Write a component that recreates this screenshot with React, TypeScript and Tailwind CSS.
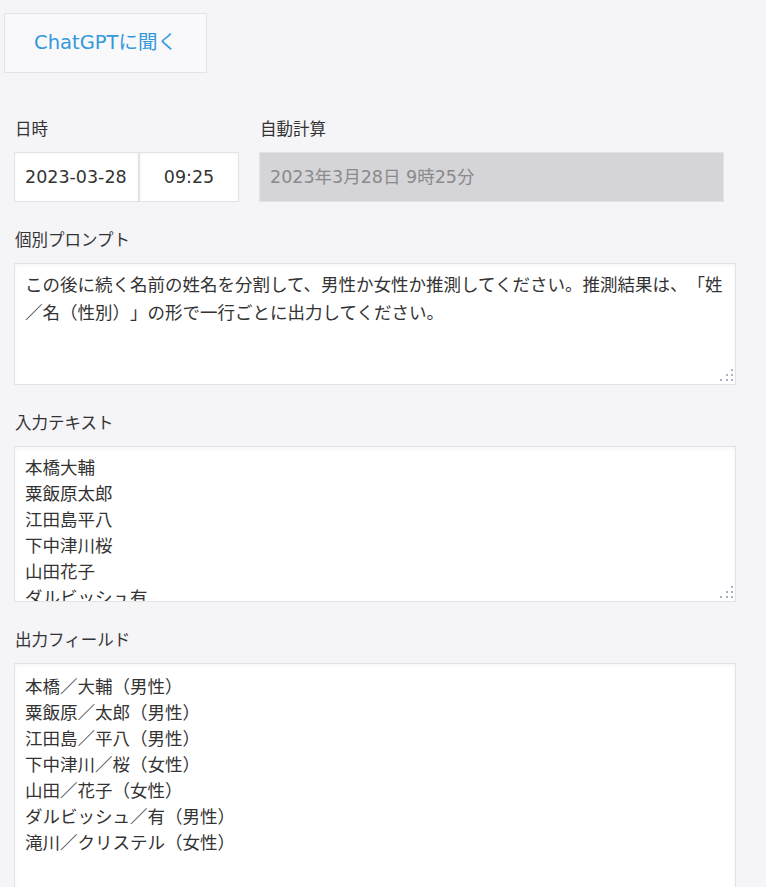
import React from 'react'

const FONT = '"DejaVu Sans", "Noto Sans CJK JP", sans-serif'

const inputNames = ['本橋大輔', '粟飯原太郎', '江田島平八', '下中津川桜', '山田花子', 'ダルビッシュ有', '滝川クリステル']

const outputs = [
  '本橋／大輔（男性）',
  '粟飯原／太郎（男性）',
  '江田島／平八（男性）',
  '下中津川／桜（女性）',
  '山田／花子（女性）',
  'ダルビッシュ／有（男性）',
  '滝川／クリステル（女性）',
]

function Grip() {
  return (
    <svg className="absolute right-[2px] bottom-[2px]" width="14" height="14" viewBox="0 0 14 14">
      <g fill="#a9b2c3">
        <rect x="12" y="1" width="2" height="2" />
        <rect x="7" y="6" width="2" height="2" />
        <rect x="12" y="6" width="2" height="2" />
        <rect x="1" y="11" width="2" height="2" />
        <rect x="7" y="11" width="2" height="2" />
        <rect x="12" y="11" width="2" height="2" />
      </g>
    </svg>
  )
}

function Label({ children }: { children: React.ReactNode }) {
  return <div className="h-5 leading-[24px] text-[16.5px] text-[#333] pl-px mb-[14px]">{children}</div>
}

export default function App() {
  return (
    <div
      className="min-h-screen bg-[#f5f4f7] pt-[13px] pl-[4px] [text-spacing-trim:space-all]"
      style={{ fontFamily: FONT }}
    >
      <button className="w-[203px] h-[60px] bg-[#f9f9fc] border border-[#e3e3e6] text-[#3498db] text-[19.5px]">
        ChatGPTに聞く
      </button>

      <div className="flex flex-col gap-[27px] pl-[10px] mt-[45px] pb-4">
        <div className="flex gap-[20px]">
          <div>
            <Label>日時</Label>
            <div className="flex">
              <div className="w-[125px] h-[50px] bg-white border border-[#e3e3e6] shadow-[inset_0_1px_3px_rgba(0,0,0,0.04)] flex items-center pl-[10px] text-[17.5px] text-[#333]">
                2023-03-28
              </div>
              <div className="w-[100px] h-[50px] bg-white border border-[#e3e3e6] shadow-[inset_0_1px_3px_rgba(0,0,0,0.04)] flex items-center justify-center text-[17.5px] text-[#333]">
                09:25
              </div>
            </div>
          </div>
          <div>
            <Label>自動計算</Label>
            <div className="w-[465px] h-[50px] bg-[#d5d4d8] border border-[#e3e3e6] flex items-center pl-[10px] text-[17.5px] text-[#8a8a8a]">
              2023年3月28日 9時25分
            </div>
          </div>
        </div>

        <div>
          <Label>個別プロンプト</Label>
          <div className="relative w-[722px] h-[122px] bg-white border border-[#e3e3e6] shadow-[inset_0_2px_4px_rgba(0,0,0,0.04)] pl-[10px] pr-[8px] pt-[7px] text-[17.5px] leading-[28px] text-[#333]">
            この後に続く名前の姓名を分割して、男性か女性か推測してください。推測結果は、「姓／名（性別）」の形で一行ごとに出力してください。
            <Grip />
          </div>
        </div>

        <div>
          <Label>入力テキスト</Label>
          <div className="relative w-[722px] h-[156px] bg-white border border-[#e3e3e6] shadow-[inset_0_2px_4px_rgba(0,0,0,0.04)] overflow-hidden">
            <div className="h-[154px] overflow-hidden pl-[10px] pt-[8px] text-[17.5px] leading-[26px] text-[#333]">
              {inputNames.map((n) => (
                <div key={n}>{n}</div>
              ))}
            </div>
            <Grip />
          </div>
        </div>

        <div>
          <Label>出力フィールド</Label>
          <div className="w-[722px] h-[260px] bg-white border border-[#e3e3e6] shadow-[inset_0_2px_4px_rgba(0,0,0,0.04)] pl-[10px] pt-[10px] text-[17.5px] leading-[26px] text-[#333]">
            {outputs.map((o) => (
              <div key={o}>{o}</div>
            ))}
          </div>
        </div>
      </div>
    </div>
  )
}
